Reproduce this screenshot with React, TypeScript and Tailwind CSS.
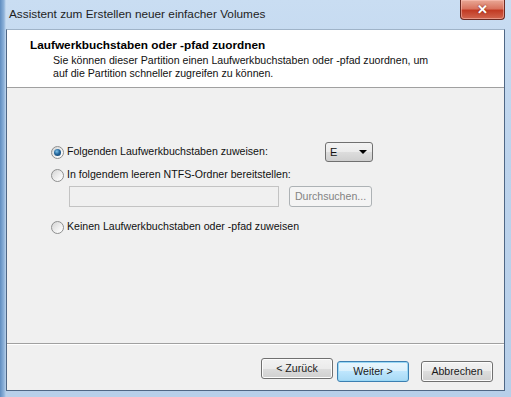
import { useState } from 'react';

type Choice = 'letter' | 'folder' | 'none';

function Radio({ checked, onClick }: { checked: boolean; onClick: () => void }) {
  return (
    <button
      type="button"
      onClick={onClick}
      className="w-[13px] h-[13px] shrink-0 rounded-full border border-[#8e8f8f] bg-[linear-gradient(135deg,#d4d4d4_0%,#f6f6f6_70%,#ffffff_100%)] flex items-center justify-center"
    >
      {checked && (
        <span className="w-[7px] h-[7px] rounded-full bg-[radial-gradient(circle_at_40%_35%,#7fc3ec_0%,#24679c_45%,#0f3a63_100%)]" />
      )}
    </button>
  );
}

function WinButton({ children, primary }: { children: React.ReactNode; primary?: boolean }) {
  return (
    <button
      type="button"
      className={
        primary
          ? 'w-[72px] h-[21px] rounded-[3px] border border-[#3c7fb1] shadow-[inset_0_0_0_1px_#9ad8f5] bg-[linear-gradient(#eaf6fd_0%,#d9f0fc_50%,#bee6fd_50%,#a7d9f5_100%)] text-[10.6px] text-[#1a1a1a]'
          : 'w-[72px] h-[21px] rounded-[3px] border border-[#707070] shadow-[inset_0_0_0_1px_#fcfcfc] bg-[linear-gradient(#f2f2f2_0%,#ebebeb_50%,#dddddd_50%,#cfcfcf_100%)] text-[10.6px] text-[#1a1a1a]'
      }
    >
      {children}
    </button>
  );
}

export default function App() {
  const [choice, setChoice] = useState<Choice>('letter');

  return (
    <div className="w-[511px] h-[397px] flex flex-col bg-[linear-gradient(90deg,#5f8dc0_0px,#8fb3da_4px,rgba(0,0,0,0)_6px),linear-gradient(180deg,#c9ddf2_0%,#bcd3ec_40%,#b7cfe9_100%)] font-['Liberation_Sans',Arial,sans-serif] text-[#000] overflow-hidden">
      {/* Titelleiste */}
      <div className="h-[29px] flex items-start justify-between shrink-0">
        <span className="pl-[9px] pt-[7px] text-[11.8px] leading-[14px] text-[#1e1e1e]">
          Assistent zum Erstellen neuer einfacher Volumes
        </span>
        <div className="mr-[6px] w-[45px] h-[20px] rounded-b-[4px] border border-t-0 border-[#6b2a22] bg-[linear-gradient(#e9a896_0%,#d9745f_45%,#c23b24_55%,#d2664f_100%)] shadow-[inset_0_0_0_1px_rgba(255,200,190,0.5)] flex items-center justify-center">
          <span className="text-white text-[13px] font-bold leading-none [text-shadow:0_0_2px_#7a2010]">✕</span>
        </div>
      </div>

      {/* Fensterinhalt */}
      <div className="mx-[6px] h-[362px] shrink-0 flex flex-col border border-[#4f6785] border-t-[#9fb3c8] bg-[#f0f0f0]">
        {/* Kopfbereich */}
        <div className="h-[58px] shrink-0 bg-white border-b border-[#a0a0a0] pl-[23px] pt-[8px]">
          <div className="text-[11.8px] leading-[14px] font-bold">Laufwerkbuchstaben oder -pfad zuordnen</div>
          <div className="ml-[23px] mt-[2px] text-[10.6px] leading-[13px] text-[#111]">
            <div>Sie können dieser Partition einen Laufwerkbuchstaben oder -pfad zuordnen, um</div>
            <div>auf die Partition schneller zugreifen zu können.</div>
          </div>
        </div>

        {/* Optionen */}
        <div className="flex-1 pt-[54px] pl-[44px] text-[10.6px] text-[#111]">
          <div className="h-[20px] flex items-center">
            <Radio checked={choice === 'letter'} onClick={() => setChoice('letter')} />
            <span className="ml-[3px] w-[258px]">Folgenden Laufwerkbuchstaben zuweisen:</span>
            <div className="w-[48px] h-[20px] rounded-[3px] border border-[#707070] bg-[linear-gradient(#f2f2f2_0%,#ebebeb_50%,#dddddd_50%,#cfcfcf_100%)] flex items-center justify-between pl-[4px] pr-[5px]">
              <span className="text-[11px]">E</span>
              <span className="w-0 h-0 border-l-[4px] border-r-[4px] border-t-[4px] border-l-transparent border-r-transparent border-t-black" />
            </div>
          </div>

          <div className="mt-[6px] h-[14px] flex items-center">
            <Radio checked={choice === 'folder'} onClick={() => setChoice('folder')} />
            <span className="ml-[3px]">In folgendem leeren NTFS-Ordner bereitstellen:</span>
          </div>

          <div className="mt-[4px] h-[21px] flex items-center pl-[18px] gap-[10px]">
            <div className="w-[210px] h-[21px] border border-[#c3c3c3] bg-[#f0f0f0]" />
            <div className="w-[83px] h-[21px] rounded-[3px] border border-[#adb2b5] bg-[#f4f4f4] flex items-center justify-center text-[#838383]">
              Durchsuchen...
            </div>
          </div>

          <div className="mt-[13px] h-[14px] flex items-center">
            <Radio checked={choice === 'none'} onClick={() => setChoice('none')} />
            <span className="ml-[3px]">Keinen Laufwerkbuchstaben oder -pfad zuweisen</span>
          </div>
        </div>

        {/* Schaltflächen */}
        <div className="h-[47px] shrink-0 border-t border-[#a0a0a0] shadow-[inset_0_1px_0_#ffffff] flex items-start pt-[14px] pl-[254px]">
          <WinButton>&lt; Zurück</WinButton>
          <div className="ml-[4px]">
            <WinButton primary>Weiter &gt;</WinButton>
          </div>
          <div className="ml-[12px]">
            <WinButton>Abbrechen</WinButton>
          </div>
        </div>
      </div>
    </div>
  );
}
